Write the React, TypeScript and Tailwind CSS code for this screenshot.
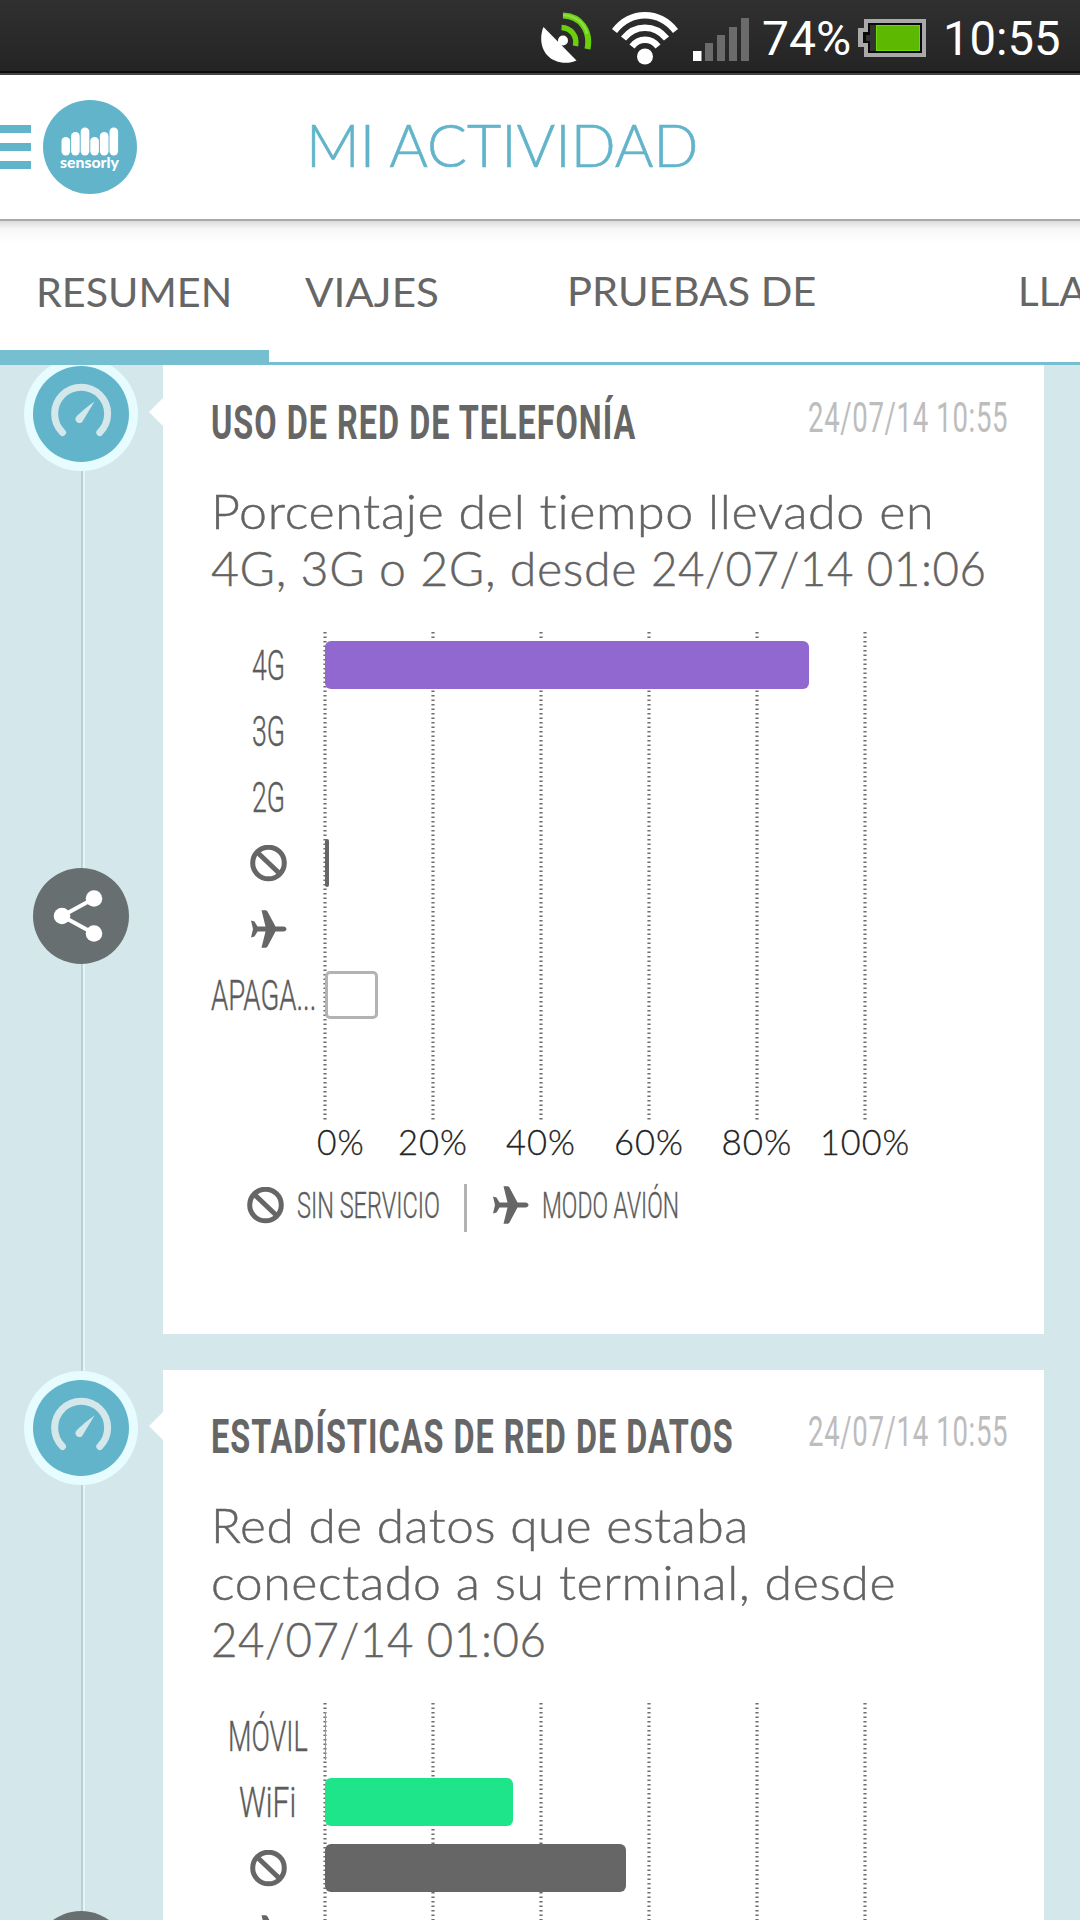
import { useLayoutEffect, useRef, useState } from "react"
import type { ReactNode } from "react"

const condensed = "font-['Roboto',sans-serif]"
const rounded = "font-['Lato',sans-serif]"

// Squeezes or stretches one line of text to the given width
function FitText({ text, width, className = "" }: { text: string; width: number; className?: string }) {
  const ref = useRef<HTMLSpanElement>(null)
  const [scale, setScale] = useState(1)

  useLayoutEffect(() => {
    if (ref.current) setScale(width / ref.current.offsetWidth)
  }, [text, width])

  return (
    <span className={`block shrink-0 ${className}`} style={{ width }}>
      <span
        ref={ref}
        className="inline-block origin-left whitespace-pre align-top"
        style={{ transform: `scaleX(${scale})` }}
      >
        {text}
      </span>
    </span>
  )
}

function SatelliteIcon() {
  return (
    <svg width="51" height="52" viewBox="0 0 51 52" fill="none">
      <path d="M2.5 15L35.500 48.500C26 53 13 51 6 43C-1 35-1 23 2.500 15Z" fill="#fff" />
      <path d="M16 35L22 28" stroke="#fff" strokeWidth="5" />
      <circle cx="22" cy="28.500" r="5" fill="#fff" />
      <path d="M20.500 15.500C30 16 36.500 24 34.500 34" stroke="#6bcf0c" strokeWidth="5.500" />
      <path d="M22 3.500C40 4 50 19 46.500 37" stroke="#6bcf0c" strokeWidth="6" />
      <path d="M22 3C36 4 44 12 46 22" stroke="#8fdc4a" strokeWidth="2.500" />
    </svg>
  )
}

function WifiIcon() {
  return (
    <svg width="66" height="54" viewBox="0 0 66 54" fill="none" stroke="#fff" strokeWidth="6.500">
      <path d="M2.500 20C19-1 47-1 63.500 20" />
      <path d="M11.500 27.500C23 13 43 13 54.500 27.500" />
      <path d="M20 35.500C27 26.500 39 26.500 46 35.500" />
      <circle cx="33" cy="45.500" r="8" fill="#fff" stroke="none" />
    </svg>
  )
}

function SignalIcon() {
  return (
    <svg width="56" height="43" viewBox="0 0 56 43" fill="#6b6b6b">
      <rect x="0" y="33" width="8.500" height="10" fill="#fff" />
      <rect x="12" y="25" width="8" height="18" />
      <rect x="24" y="17" width="8" height="26" />
      <rect x="36" y="9" width="8" height="34" />
      <rect x="48" y="0" width="8" height="43" />
    </svg>
  )
}

function BatteryIcon() {
  return (
    <svg width="68" height="38" viewBox="0 0 68 38">
      <path d="M6 0H68V38H6V28H0V9H6Z" fill="#a9a9a9" />
      <path d="M10 4H64V34H10V24H5V13H10Z" fill="#0a0a0a" />
      <path d="M12 6H18V32H12V22H8V16H12Z" fill="#333" />
      <rect x="18" y="6" width="44" height="26" fill="#6fd80a" />
      <rect x="19" y="7" width="42" height="24" fill="#5cb800" />
    </svg>
  )
}

function StatusBar() {
  return (
    <div className="flex h-[75px] shrink-0 border-b-2 border-[#444] bg-linear-to-b from-[#303030] to-[#242424]">
      <div className="flex w-full border-b-2 border-[#0c0c0c] pl-[541px]">
        <div className="mt-[12px]"><SatelliteIcon /></div>
        <div className="mt-[11px] ml-[20px]"><WifiIcon /></div>
        <div className="mt-[18px] ml-[15px]"><SignalIcon /></div>
        <FitText text="74%" width={89} className={`${condensed} mt-[15px] ml-[13px] text-[48px] leading-[48px] text-white`} />
        <div className="mt-[18.5px] ml-[7px]"><BatteryIcon /></div>
        <FitText text="10:55" width={118} className={`${condensed} mt-[15px] ml-[17px] text-[48px] leading-[48px] text-white`} />
      </div>
    </div>
  )
}

function Logo() {
  return (
    <div className="flex h-[94px] w-[94px] flex-col items-center rounded-full bg-[#61b4ca] pt-[27px]">
      <svg width="58" height="29" viewBox="0 0 58 29" fill="#fff">
        <rect x="0.500" y="10" width="8.600" height="18.500" rx="4.200" />
        <rect x="10.100" y="5" width="8.600" height="23.500" rx="4.200" />
        <rect x="19.700" y="0.500" width="8.600" height="28" rx="4.200" />
        <rect x="29.300" y="10" width="8.600" height="18.500" rx="4.200" />
        <rect x="38.900" y="5" width="8.600" height="23.500" rx="4.200" />
        <rect x="48.500" y="0.500" width="8.600" height="28" rx="4.200" />
      </svg>
      <FitText text="sensorly" width={59} className={`${rounded} -mt-[3px] -ml-px text-[15px] leading-[18px] font-black text-white`} />
    </div>
  )
}

function Header() {
  return (
    <div className="flex h-[146px] shrink-0 items-center border-b-2 border-[#a9a9a9] bg-white">
      <div className="flex w-[31px] flex-col gap-[10px]">
        <div className="h-[8px] bg-[#61b4ca]" />
        <div className="h-[8px] bg-[#61b4ca]" />
        <div className="h-[8px] bg-[#61b4ca]" />
      </div>
      <div className="ml-[12px]"><Logo /></div>
      <FitText text="MI ACTIVIDAD" width={392} className={`${rounded} mb-[6px] ml-[169px] text-[58.500px] leading-[70px] font-light text-[#61b4ca] [-webkit-text-stroke:0.600px_#61b4ca]`} />
    </div>
  )
}

function Tabs() {
  const tab = `${rounded} text-[41.500px] leading-[48px] text-[#666]`
  return (
    <div className="relative h-[144px] shrink-0 overflow-hidden border-b-[3px] border-[#75bfd1] bg-white">
      <div className="h-[22px] bg-linear-to-b from-[#dcdcdc] via-[#f6f6f6] via-35% to-white" />
      <div className="flex w-[1300px] pt-[24px]">
        <FitText text="RESUMEN" width={196} className={`${tab} ml-[36px]`} />
        <FitText text="VIAJES" width={134} className={`${tab} ml-[73px]`} />
        <FitText text="PRUEBAS DE" width={249} className={`${tab} -mt-px ml-[128px]`} />
        <FitText text="LLAMADAS" width={212} className={`${tab} -mt-px ml-[202px]`} />
      </div>
      <div className="absolute bottom-0 left-0 h-[12px] w-[269px] bg-[#75bfd1]" />
      <div className="absolute -bottom-[3px] left-0 h-[3px] w-[269px] bg-[#60b3c9]" />
    </div>
  )
}

function NoServiceIcon() {
  return (
    <svg width="37" height="37" viewBox="0 0 37 37" fill="none" stroke="#666" strokeWidth="5">
      <circle cx="18.500" cy="18" r="15.800" />
      <path d="M8 8L29 28" />
    </svg>
  )
}

function PlaneIcon() {
  return (
    <svg width="37" height="38" viewBox="0 0 37 38" fill="#666">
      <path d="M36.500 19c0-1.600-1.500-2.500-3-2.500H25.500L17.500 1.500C17 .5 16 .2 15 .2H11.500L15.500 16.500H7.500L4.500 11.500L1 10.500L3 19L1 27.500L4.500 26.500L7.500 21.500H15.500L11.500 37.800H15C16 37.800 17 37.500 17.500 36.500L25.500 21.500H33.500c1.500 0 3-.9 3-2.500Z" />
    </svg>
  )
}

function GaugeBadge() {
  return (
    <svg width="114" height="114" viewBox="0 0 114 114" fill="none">
      <circle cx="57" cy="57" r="57" fill="#e6fcff" />
      <circle cx="57" cy="57" r="48" fill="#61b4ca" />
      <path d="M38.500 75.500A26.500 26.500 0 1 1 75.800 75.500" stroke="#d4e7ea" strokeWidth="7" strokeLinecap="round" />
      <path d="M70.500 44.500L58.500 64.500C56 68 50.500 65 51.500 61C52 59.500 60 52 70.500 44.500Z" fill="#d4e7ea" />
    </svg>
  )
}

function ShareBadge() {
  return (
    <svg width="96" height="96" viewBox="0 0 96 96">
      <circle cx="48" cy="48" r="48" fill="#676f71" />
      <path d="M61 30.500L29 48L61 65.500" fill="none" stroke="#fff" strokeWidth="4" />
      <circle cx="29" cy="48" r="8.300" fill="#fff" />
      <circle cx="61" cy="30.500" r="8.300" fill="#fff" />
      <circle cx="61" cy="65.500" r="8.300" fill="#fff" />
    </svg>
  )
}

type Row = { label: ReactNode; percent: number; bar: string }
type Segment = { text: string; width: number }

const labelClass = `${condensed} pt-px text-[42px] leading-[48px] font-light text-[#5c5c5c] [-webkit-text-stroke:0.400px_#5c5c5c]`

const telephony: Row[] = [
  { label: <FitText text="4G" width={33} className={labelClass} />, percent: 89.6, bar: "rounded-[6px] bg-[#9168cf]" },
  { label: <FitText text="3G" width={33} className={labelClass} />, percent: 0, bar: "" },
  { label: <FitText text="2G" width={33} className={labelClass} />, percent: 0, bar: "" },
  { label: <NoServiceIcon />, percent: 0.7, bar: "rounded-[2px] bg-[#666]" },
  { label: <PlaneIcon />, percent: 0, bar: "" },
  {
    label: <FitText text="APAGA..." width={105} className={`${labelClass} mr-[10px]`} />,
    percent: 9.8,
    bar: "rounded-[5px] border-3 border-[#b3b3b3] bg-white",
  },
]

const dataNetwork: Row[] = [
  { label: <FitText text="MÓVIL" width={80} className={labelClass} />, percent: 0.15, bar: "bg-[#84b52c]" },
  { label: <FitText text="WiFi" width={57} className={`${labelClass} mr-[2px]`} />, percent: 34.8, bar: "rounded-[6px] bg-[#1fe58a]" },
  { label: <NoServiceIcon />, percent: 55.8, bar: "rounded-[6px] bg-[#666]" },
  { label: <PlaneIcon />, percent: 0, bar: "" },
]

const axis = [
  { text: "0%", width: 48 },
  { text: "20%", width: 70 },
  { text: "40%", width: 70 },
  { text: "60%", width: 70 },
  { text: "80%", width: 71 },
  { text: "100%", width: 90 },
]

function Chart({ rows }: { rows: Row[] }) {
  return (
    <div className="relative h-[488px] pt-[9px]">
      <svg className="absolute top-0 left-[160px]" width="546" height="488" stroke="#6f6f6f" strokeWidth="3.200" strokeDasharray="1.600 2.900">
        {axis.map((a, i) => (
          <line key={a.text} x1={2 + i * 108} x2={2 + i * 108} y1="0" y2="488" />
        ))}
      </svg>
      <div className="relative flex flex-col gap-[18px]">
        {rows.map((row, i) => (
          <div key={i} className="flex h-[48px]">
            <div className="flex w-[162px] items-center justify-center pl-[48px]">{row.label}</div>
            <div className={`h-[48px] ${row.bar}`} style={{ width: row.percent * 5.4 }} />
          </div>
        ))}
      </div>
    </div>
  )
}

function Axis() {
  return (
    <div className="flex pt-px pl-[108px]">
      {axis.map((a, i) => (
        <div key={a.text} className={`flex w-[108px] shrink-0 justify-center ${i === 0 ? "pl-[31px]" : ""}`}>
          <FitText
            text={a.text}
            width={a.width}
            className={`${rounded} text-[35px] leading-[40px] font-light tracking-[1px] text-[#222] [-webkit-text-stroke:0.300px_#222]`}
          />
        </div>
      ))}
    </div>
  )
}

function Legend() {
  const text = `${condensed} mt-[3px] text-[37px] leading-[48px] font-light text-[#5c5c5c] [-webkit-text-stroke:0.400px_#5c5c5c]`
  return (
    <div className="mt-[18px] flex h-[54px] items-start pl-[84px]">
      <div className="mt-[8px]"><NoServiceIcon /></div>
      <FitText text="SIN SERVICIO" width={143} className={`${text} ml-[13px]`} />
      <div className="mt-[5px] ml-[24px] h-[48px] w-[3px] bg-[#b3b3b3]" />
      <div className="mt-[7px] ml-[25px]"><PlaneIcon /></div>
      <FitText text="MODO AVIÓN" width={137} className={`${text} ml-[13px]`} />
    </div>
  )
}

function Entry({ title, titleWidth, lines, rows, footer, className }: {
  title: string
  titleWidth: number
  lines: Segment[][]
  rows: Row[]
  footer?: ReactNode
  className: string
}) {
  return (
    <div className={`flex shrink-0 ${className}`}>
      {/* Timeline */}
      <div className="flex w-[163px] shrink-0 flex-col pt-px">
        <div className="pl-[24px]"><GaugeBadge /></div>
        <div className="flex flex-1 items-center pt-[27px] pl-[33px]"><ShareBadge /></div>
      </div>

      {/* Card */}
      <div className="relative w-[881px] shrink-0 bg-white">
        <svg className="absolute top-[40px] -left-[14px]" width="15" height="32" viewBox="0 0 15 32">
          <path d="M15 1V31L0 16Z" fill="#fff" />
        </svg>
        <div className="flex h-[126px] items-start justify-between pt-[37px] pr-[36px] pl-[48px]">
          <FitText text={title} width={titleWidth} className={`${condensed} mt-[6px] text-[48px] leading-[48px] font-bold tracking-[1.500px] text-[#666]`} />
          <FitText text="24/07/14 10:55" width={200} className={`${condensed} text-[43px] leading-[48px] tracking-[1px] text-[#bdbdbd]`} />
        </div>
        <div className="pl-[48px]">
          {lines.map((line, i) => (
            <div key={i} className="flex">
              {line.map((segment) => (
                <FitText
                  key={segment.text}
                  text={segment.text}
                  width={segment.width}
                  className={`${rounded} text-[47.500px] leading-[57px] font-light tracking-[0.600px] text-[#636363] [-webkit-text-stroke:0.450px_#636363]`}
                />
              ))}
            </div>
          ))}
        </div>
        <div className="pt-[36px]">
          <Chart rows={rows} />
        </div>
        {footer}
      </div>
    </div>
  )
}

export default function App() {
  return (
    <div className="flex h-[1920px] w-[1080px] flex-col overflow-hidden bg-white">
      <StatusBar />
      <Header />
      <Tabs />
      <div className="relative min-h-0 flex-1 overflow-hidden bg-[#d4e7ea]">
        <div className="absolute top-0 left-[81px] h-full w-[4px] border-r-2 border-l-2 border-r-[#e4f5f7] border-l-[#bccfd3]" />
        <div className="relative -mt-[9px] flex flex-col gap-[36px]">
          <Entry
            title="USO DE RED DE TELEFONÍA"
            titleWidth={425}
            lines={[
              [{ text: "Porcentaje del tiempo llevado en", width: 723 }],
              [
                { text: "4G, 3G o 2G, desde ", width: 440 },
                { text: "24/07/14 01:06", width: 335 },
              ],
            ]}
            rows={telephony}
            footer={
              <>
                <Axis />
                <Legend />
              </>
            }
            className="h-[978px]"
          />
          <Entry
            title="ESTADÍSTICAS DE RED DE DATOS"
            titleWidth={523}
            lines={[
              [{ text: "Red de datos que estaba", width: 538 }],
              [{ text: "conectado a su terminal, desde", width: 685 }],
              [{ text: "24/07/14 01:06", width: 335 }],
            ]}
            rows={dataNetwork}
            className="h-[1035px]"
          />
        </div>
      </div>
    </div>
  )
}
